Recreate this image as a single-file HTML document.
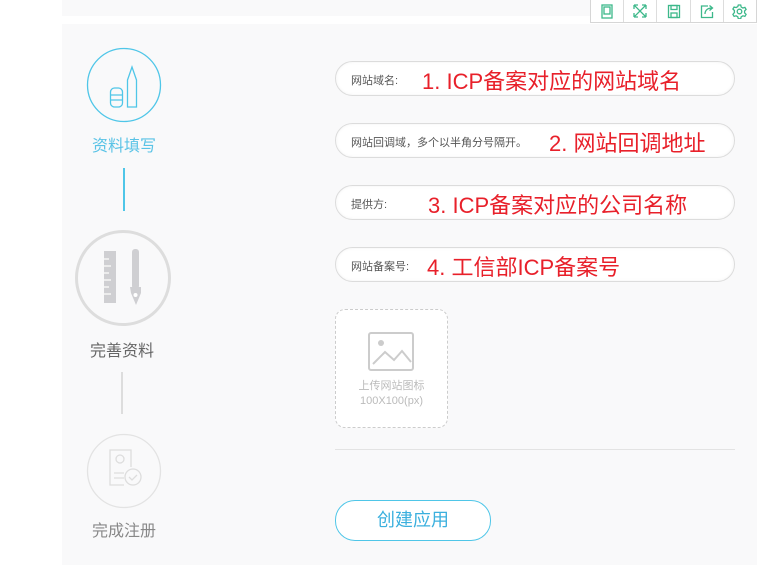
<!DOCTYPE html>
<html><head><meta charset="utf-8"><style>
body{margin:0;width:765px;height:577px;background:#fff;position:relative;overflow:hidden;font-family:"Liberation Sans","Noto Sans CJK SC",sans-serif}
.a{position:absolute}
.top{left:62px;top:0;width:695px;height:16px;background:#f9f9fa}
.panel{left:62px;top:24px;width:695px;height:541px;background:#f9f9fa}
.inp{position:absolute;left:335px;width:398px;height:33px;border:1px solid #dcdcdc;border-radius:18px;background:#fff;box-shadow:inset 0 0 3px rgba(0,0,0,.05)}
.inp .l{position:absolute;left:15px;top:10px;font-size:11px;color:#555}
.inp .r{position:absolute;top:2px;font-size:22px;color:#e8202a;white-space:nowrap}
.tb{left:590px;top:0;width:165px;height:22px;border:1px solid #d6d6d6;border-top:none;background:#fff;display:flex}
.tb div{flex:1;border-right:1px solid #ddd;display:flex;align-items:center;justify-content:center}
.tb div:last-child{border-right:none}
.st{font-size:16px;width:120px;text-align:center}
</style></head><body>
<div class="a top"></div>
<div class="a panel"></div>
<div class="a tb">
<div><svg width="14" height="15" viewBox="0 0 14 15" fill="none" stroke="#3cb88a" stroke-width="1.3"><rect x="2" y="1" width="10" height="13"/><rect x="4" y="3" width="6" height="7"/></svg></div>
<div><svg width="14" height="14" viewBox="0 0 14 14" fill="none" stroke="#3cb88a" stroke-width="1.3"><path d="M1 1L13 13M13 1L1 13M1 1h4M1 1v4M13 1h-4M13 1v4M1 13h4M1 13v-4M13 13h-4M13 13v-4"/></svg></div>
<div><svg width="14" height="15" viewBox="0 0 14 15" fill="none" stroke="#3cb88a" stroke-width="1.3"><rect x="1.5" y="1.5" width="11" height="12"/><rect x="4" y="1.5" width="6" height="4"/><rect x="4" y="9" width="6" height="4.5"/></svg></div>
<div><svg width="14" height="15" viewBox="0 0 14 15" fill="none" stroke="#3cb88a" stroke-width="1.3"><path d="M8 2H1.5v11.5h11V8M5 10c0-4 3-6 7-6M9.5 1.5L12.5 4 9.5 6.5"/></svg></div>
<div><svg width="15" height="15" viewBox="0 0 15 15" fill="none" stroke="#3cb88a" stroke-width="1.3"><circle cx="7.5" cy="7.5" r="2.3"/><path d="M6.3 1h2.4l.5 2 1.7 1 2-.6 1.2 2-1.5 1.5v2l1.5 1.5-1.2 2-2-.6-1.7 1-.5 2H6.3l-.5-2-1.7-1-2 .6-1.2-2L2.4 8.5v-2L.9 5l1.2-2 2 .6 1.7-1z"/></svg></div>
</div>

<svg class="a" style="left:86px;top:47px" width="76" height="76"><circle cx="38" cy="38" r="36.5" fill="none" stroke="#4fc6e8" stroke-width="1.3"/><g fill="none" stroke="#4fc6e8" stroke-width="1.3"><rect x="24.5" y="41" width="12" height="19" rx="4"/><path d="M24.5 48h12M24.5 53h12"/><path d="M41.5 60V33l4.5-13 4.5 13v27z"/></g></svg>
<div class="a st" style="left:64px;top:132px;color:#5ac3e6">资料填写</div>
<div class="a" style="left:123px;top:168px;width:2px;height:43px;background:#4fc6e8"></div>
<svg class="a" style="left:74px;top:229px" width="98" height="98"><circle cx="49" cy="49" r="46.5" fill="none" stroke="#ddd" stroke-width="3"/><rect x="30" y="22" width="12" height="52" fill="#cfcfd2"/><g stroke="#f5f5f5" stroke-width="1.5"><path d="M30 30h5M30 37h7M30 44h5M30 51h7M30 58h5M30 65h7"/></g><rect x="58" y="20" width="7" height="40" rx="3" fill="#cfcfd2"/><path d="M56 58h11v6l-5 12-5-12z" fill="#cfcfd2"/><circle cx="61.5" cy="66" r="2" fill="#fff"/></svg>
<div class="a st" style="left:62px;top:337px;color:#666">完善资料</div>
<div class="a" style="left:121px;top:372px;width:2px;height:42px;background:#ddd"></div>
<svg class="a" style="left:86px;top:433px" width="76" height="76"><circle cx="38" cy="38" r="36.5" fill="none" stroke="#e3e3e3" stroke-width="1.3"/><g fill="none" stroke="#ddd" stroke-width="1.3"><path d="M38 52H24V17h21v17"/><circle cx="34" cy="26" r="4"/><path d="M28 40h10M28 45h10"/><circle cx="47" cy="44" r="8"/><path d="M43 44l3 3 5-5"/></g></svg>
<div class="a st" style="left:64px;top:517px;color:#888">完成注册</div>

<div class="inp" style="top:61px"><span class="l">网站域名:</span><span class="r" style="left:86px">1. ICP备案对应的网站域名</span></div>
<div class="inp" style="top:123px"><span class="l">网站回调域，多个以半角分号隔开。</span><span class="r" style="left:213px">2. 网站回调地址</span></div>
<div class="inp" style="top:185px"><span class="l">提供方:</span><span class="r" style="left:92px">3. ICP备案对应的公司名称</span></div>
<div class="inp" style="top:247px"><span class="l">网站备案号:</span><span class="r" style="left:91px">4. 工信部ICP备案号</span></div>

<div class="a" style="left:335px;top:309px;width:111px;height:117px;border:1px dashed #ccc;border-radius:10px;background:#fff"></div>
<svg class="a" style="left:368px;top:332px" width="47" height="40"><rect x="1" y="1" width="44" height="37" rx="2" fill="none" stroke="#ccc" stroke-width="2"/><circle cx="13" cy="11" r="3" fill="#ccc"/><path d="M5 32l12-12 9 8 8-9 9 11" fill="none" stroke="#ccc" stroke-width="2"/></svg>
<div class="a" style="left:335px;top:379px;width:113px;text-align:center;font-size:11px;color:#bbb;line-height:15px">上传网站图标<br>100X100(px)</div>
<div class="a" style="left:335px;top:449px;width:400px;height:1px;background:#e3e3e3"></div>
<div class="a" style="left:335px;top:500px;width:154px;height:39px;border:1px solid #4fc6e8;border-radius:20px;background:#fff;text-align:center;line-height:39px;font-size:18px;color:#3bb0de">创建应用</div>
</body></html>
